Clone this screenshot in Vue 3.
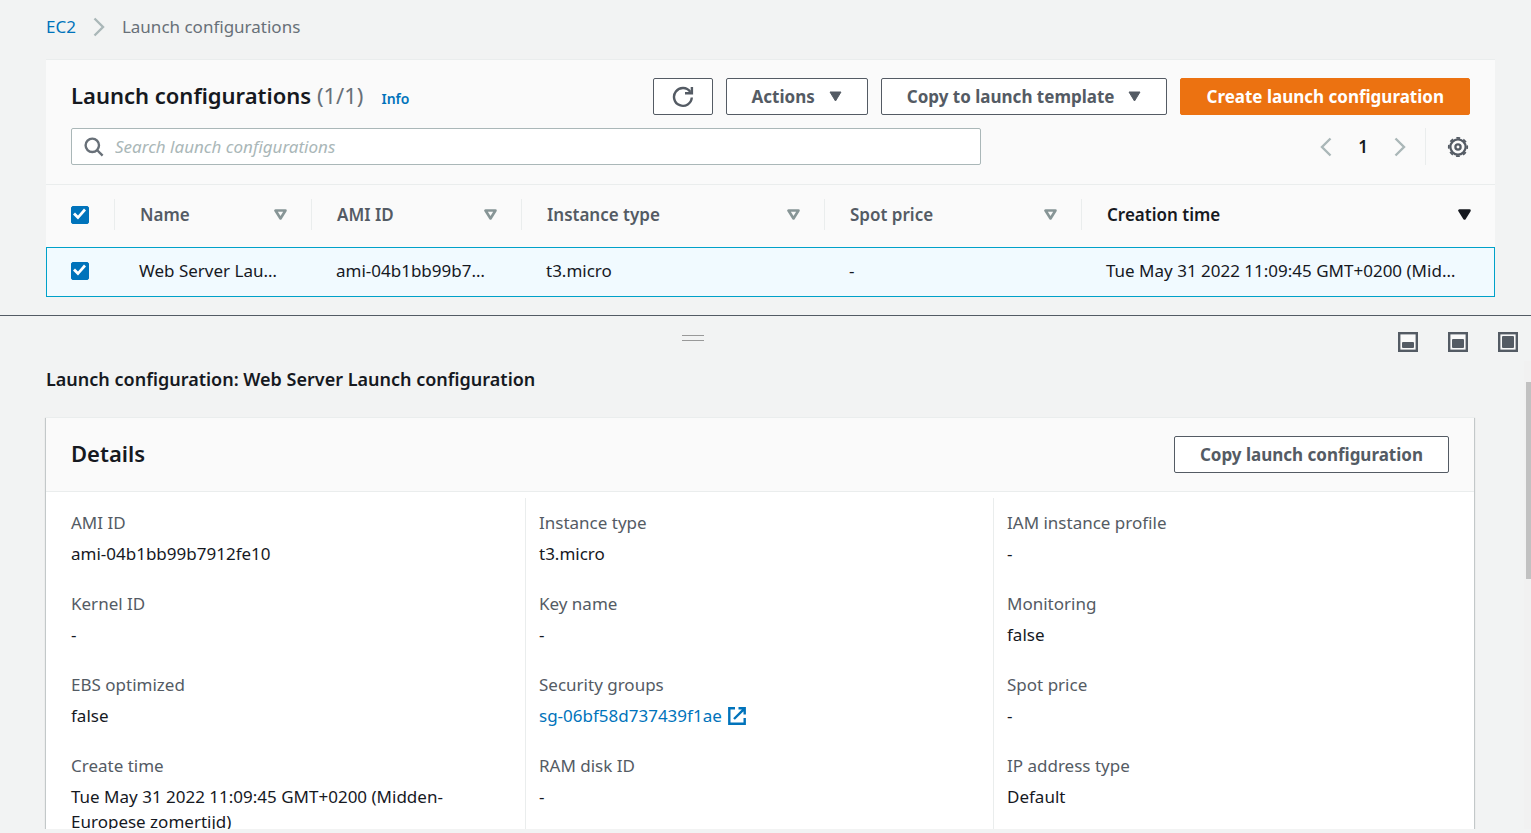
<script setup>
import { ref } from 'vue'

const query = ref('')
const allSelected = ref(true)
const rowSelected = ref(true)

const columns = [
  { label: 'Name', cls: 'col-name' },
  { label: 'AMI ID', cls: 'col-ami' },
  { label: 'Instance type', cls: 'col-type' },
  { label: 'Spot price', cls: 'col-spot' },
  { label: 'Creation time', cls: 'col-time', sorted: true },
]

const createTime = 'Tue May 31 2022 11:09:45 GMT+0200 (Midden-Europese zomertijd)'
const row = ['Web Server Launch configuration', 'ami-04b1bb99b7912fe10', 't3.micro', '-', createTime]

const details = [
  [
    { label: 'AMI ID', value: 'ami-04b1bb99b7912fe10' },
    { label: 'Kernel ID', value: '-' },
    { label: 'EBS optimized', value: 'false' },
    { label: 'Create time', value: createTime },
  ],
  [
    { label: 'Instance type', value: 't3.micro' },
    { label: 'Key name', value: '-' },
    { label: 'Security groups', value: 'sg-06bf58d737439f1ae', link: true },
    { label: 'RAM disk ID', value: '-' },
  ],
  [
    { label: 'IAM instance profile', value: '-' },
    { label: 'Monitoring', value: 'false' },
    { label: 'Spot price', value: '-' },
    { label: 'IP address type', value: 'Default' },
  ],
]

const panelSizes = [
  { label: 'Small panel', y: 10, h: 6 },
  { label: 'Medium panel', y: 7, h: 9 },
  { label: 'Full panel', y: 4, h: 12 },
]
</script>

<template>
  <div class="page">
    <main class="list">
      <nav class="crumbs" aria-label="Breadcrumbs">
        <a href="#">EC2</a>
        <svg class="chevron" width="12" height="20" viewBox="0 0 12 20"><path d="M1.5 1.5 10 10l-8.500 8.500" /></svg>
        <span>Launch configurations</span>
      </nav>

      <section class="table-card">
        <header class="toolbar">
          <h1>Launch configurations <span class="count">(1/1)</span></h1>
          <a class="info" href="#">Info</a>
          <div class="actions">
            <button class="btn icon-btn" type="button" aria-label="Refresh">
              <svg width="22" height="22" viewBox="0 0 22 22" fill="none" stroke="currentColor" stroke-width="2.400">
                <path d="M19.800 11.500A8.900 8.900 0 1 1 18.200 5.800" />
                <path d="M19.900 1V7.300H13" />
                <path d="M16.500 7.500 20 3.500V7.500z" fill="currentColor" stroke="none" />
              </svg>
            </button>
            <button class="btn" type="button">
              Actions
              <svg class="caret" width="13" height="11" viewBox="0 0 13 11"><path d="M1 1h11l-5.500 9z" /></svg>
            </button>
            <button class="btn" type="button">
              Copy to launch template
              <svg class="caret" width="13" height="11" viewBox="0 0 13 11"><path d="M1 1h11l-5.500 9z" /></svg>
            </button>
            <button class="btn primary" type="button">Create launch configuration</button>
          </div>
        </header>

        <div class="filters">
          <label class="search">
            <svg width="20" height="20" viewBox="0 0 20 20" fill="none" stroke="#687078" stroke-width="2.400">
              <circle cx="8.300" cy="8.300" r="6.700" /><path d="m13 13 5.600 5.600" />
            </svg>
            <input v-model="query" type="text" placeholder="Search launch configurations" aria-label="Search launch configurations" />
          </label>
          <div class="pager">
            <button type="button" aria-label="Previous page">
              <svg class="chevron" width="12" height="20" viewBox="0 0 12 20"><path d="M10.500 1.500 2 10l8.500 8.500" /></svg>
            </button>
            <button class="current" type="button">1</button>
            <button type="button" aria-label="Next page">
              <svg class="chevron" width="12" height="20" viewBox="0 0 12 20"><path d="M1.500 1.500 10 10l-8.500 8.500" /></svg>
            </button>
          </div>
          <button class="gear" type="button" aria-label="Preferences">
            <svg width="22" height="22" viewBox="0 0 22 22" fill="none" stroke="currentColor">
              <circle cx="11" cy="11" r="7.600" stroke-width="2.200" />
              <circle cx="11" cy="11" r="9.200" stroke-width="1.800" stroke-dasharray="3.800 3.425" stroke-dashoffset="1.900" />
              <circle cx="11" cy="11" r="2.600" stroke-width="2.300" />
            </svg>
          </button>
        </div>

        <table>
          <thead>
            <tr>
              <th class="col-check" scope="col">
                <div class="cell"><input v-model="allSelected" type="checkbox" aria-label="Select all" /></div>
              </th>
              <th v-for="c in columns" :key="c.label" :class="[c.cls, { sorted: c.sorted }]" scope="col">
                <div class="cell">
                  <span>{{ c.label }}</span>
                  <svg width="13" height="11" viewBox="0 0 13 11"><path d="M1.500 1.500h10l-5 8z" /></svg>
                </div>
              </th>
            </tr>
          </thead>
          <tbody>
            <tr>
              <td><input v-model="rowSelected" type="checkbox" aria-label="Select Web Server Launch configuration" /></td>
              <td v-for="v in row" :key="v">{{ v }}</td>
            </tr>
          </tbody>
        </table>
      </section>
    </main>

    <section class="split">
      <div class="split-bar">
        <div class="handle" role="separator" aria-label="Resize panel"></div>
        <div class="sizes">
          <button v-for="s in panelSizes" :key="s.label" type="button" :aria-label="s.label">
            <svg width="20" height="20" viewBox="0 0 20 20">
              <rect x="1.200" y="1.200" width="17.600" height="17.600" fill="#fafafa" stroke="#545b64" stroke-width="2.400" />
              <rect x="4" :y="s.y" width="12" :height="s.h" rx="1" fill="#545b64" />
            </svg>
          </button>
        </div>
      </div>

      <div class="split-body">
        <div class="split-content">
          <h2 class="panel-title">Launch configuration: Web Server Launch configuration</h2>
          <article class="details">
            <header>
              <h2>Details</h2>
              <button class="btn" type="button">Copy launch configuration</button>
            </header>
            <div class="grid">
              <dl v-for="(group, i) in details" :key="i">
                <div v-for="d in group" :key="d.label" class="pair">
                  <dt>{{ d.label }}</dt>
                  <dd>
                    <a v-if="d.link" href="#">{{ d.value }}
                      <svg width="18" height="18" viewBox="0 0 18 18" fill="none" stroke="currentColor" stroke-width="2.400">
                        <path d="M7 1.300H1.300v15.400h15.400V11" /><path d="M10.500 1.300h6.200v6.200M16.200 1.800 6 12" />
                      </svg>
                    </a>
                    <template v-else>{{ d.value }}</template>
                  </dd>
                </div>
              </dl>
            </div>
          </article>
        </div>
        <div class="scrollbar" aria-hidden="true"><div class="thumb"></div></div>
      </div>
    </section>
  </div>
</template>

<style>
body {
  background: #f2f3f3;
}
</style>

<style scoped>
.page {
  display: flex;
  flex-direction: column;
  height: 100vh;
  box-sizing: border-box;
  padding-bottom: 4px;
  overflow: hidden;
  background: #f2f3f3;
  color: #16191f;
  font-family: "Noto Sans", "Open Sans", sans-serif;
  font-size: 17px;
  line-height: 25px;
}
.page * {
  box-sizing: border-box;
}
button,
input {
  font: inherit;
  color: inherit;
}
button {
  padding: 0;
  border: 0;
  background: none;
  cursor: pointer;
}
svg {
  display: block;
  flex: none;
}
a {
  color: #0073bb;
  text-decoration: none;
}
h1,
h2,
dl,
dd {
  margin: 0;
}
.list {
  flex: none;
  padding: 14px 36px 18px 46px;
}
.crumbs {
  display: flex;
  align-items: center;
  gap: 17px;
  height: 25px;
  margin-bottom: 20px;
  color: #687078;
}
.chevron {
  fill: none;
  stroke: #aab7b8;
  stroke-width: 2.4;
}
.table-card {
  border-top: 1px solid #eaeded;
  background: #fafafa;
}
.toolbar {
  display: flex;
  align-items: center;
  padding: 18px 25px 0;
}
h1,
.details h2 {
  padding-bottom: 4px;
  font-size: 22px;
  line-height: 28px;
  font-weight: 600;
}
.count {
  color: #687078;
  font-weight: 400;
}
.info {
  margin: 4px 0 0 18px;
  font-size: 14px;
  line-height: 20px;
  font-weight: 600;
}
.actions {
  display: flex;
  gap: 13px;
  margin-left: auto;
}
.btn {
  display: flex;
  align-items: center;
  justify-content: center;
  gap: 14px;
  height: 37px;
  padding: 0 25px 1px;
  border: 1px solid #545b64;
  border-radius: 2px;
  background: #fff;
  color: #545b64;
  font-weight: 700;
  white-space: nowrap;
}
.icon-btn {
  padding: 0 18px;
}
.caret {
  fill: currentColor;
  stroke: currentColor;
  stroke-linejoin: round;
}
.primary {
  border-color: #ec7211;
  background: #ec7211;
  color: #fff;
}
.filters {
  display: flex;
  align-items: center;
  padding: 13px 26px 19px 25px;
}
.search {
  display: flex;
  align-items: center;
  gap: 11px;
  flex: 0 1 910px;
  height: 37px;
  padding: 0 12px;
  border: 1px solid #aab7b8;
  border-radius: 2px;
  background: #fff;
}
.search input {
  flex: 1;
  min-width: 0;
  padding: 0;
  border: 0;
  outline: 0;
  background: none;
}
.search input::placeholder {
  color: #aab7b8;
  font-style: italic;
  opacity: 1;
}
.pager {
  display: flex;
  align-items: center;
  gap: 26px;
  height: 37px;
  margin-left: auto;
  padding-right: 19px;
  border-right: 1px solid #eaeded;
}
.current {
  font-weight: 600;
}
.gear {
  margin-left: 21px;
  color: #545b64;
}
table {
  width: 100%;
  table-layout: fixed;
  border-collapse: separate;
  border-spacing: 0;
}
.col-check {
  width: 69px;
}
.col-name {
  width: 197px;
}
.col-ami {
  width: 210px;
}
.col-type {
  width: 303px;
}
.col-spot {
  width: 257px;
}
th {
  height: 63px;
  padding: 0 0 3px;
  border-top: 1px solid #eaeded;
  color: #545b64;
  font-weight: 600;
  text-align: left;
}
.cell {
  display: flex;
  align-items: center;
  justify-content: space-between;
  height: 31px;
  padding: 0 24px 0 25px;
  border-right: 1px solid #eaeded;
}
.cell svg {
  fill: none;
  stroke: #879596;
  stroke-width: 2.6;
  stroke-linejoin: round;
}
.sorted {
  color: #16191f;
}
.sorted .cell {
  border-right: 0;
}
.sorted .cell svg {
  fill: #16191f;
  stroke: #16191f;
}
td {
  height: 50px;
  padding: 0 30px 3px 24px;
  overflow: hidden;
  border: solid #00a1c9;
  border-width: 1px 0;
  background: #f1faff;
  text-overflow: ellipsis;
  white-space: nowrap;
}
td:first-child {
  padding-right: 0;
  border-left-width: 1px;
}
td:last-child {
  border-right-width: 1px;
}
input[type="checkbox"] {
  display: block;
  flex: none;
  width: 18px;
  height: 18px;
  margin: 0;
  appearance: none;
  border: 1px solid #687078;
  border-radius: 2px;
  background: #fff;
}
input[type="checkbox"]:checked {
  border-color: #0073bb;
  background: #0073bb;
}
input[type="checkbox"]:checked::after {
  content: "";
  display: block;
  width: 16px;
  height: 16px;
  background: #fff;
  clip-path: polygon(1px 8px, 3px 6px, 6px 9px, 12px 2px, 14px 4px, 6px 13px);
}
.split {
  display: flex;
  flex: 1;
  flex-direction: column;
  min-height: 0;
  border-top: 1px solid #545b64;
}
.split-bar {
  display: grid;
  grid-template-columns: 1fr auto;
  column-gap: 12px;
  flex: none;
  height: 45px;
  padding: 16px 13px 0 0;
}
.handle {
  width: 22px;
  height: 6px;
  margin-top: 3px;
  justify-self: center;
  border: solid #999;
  border-width: 1px 0;
}
.sizes {
  display: flex;
  gap: 30px;
  height: 20px;
}
.split-body {
  display: flex;
  flex: 1;
  min-height: 0;
}
.split-content {
  flex: 1;
  overflow: hidden;
  padding: 6px 50px 0 46px;
}
.panel-title {
  margin-bottom: 25px;
  font-size: 18px;
  line-height: 25px;
  font-weight: 600;
}
.details {
  border-top: 1px solid #eaeded;
  background: #fff;
  box-shadow: 0 1px 1px 0 rgba(0, 28, 36, 0.3), 1px 1px 1px 0 rgba(0, 28, 36, 0.15), -1px 1px 1px 0 rgba(0, 28, 36, 0.15);
}
.details header {
  display: flex;
  align-items: center;
  justify-content: space-between;
  padding: 18px 25px;
  border-bottom: 1px solid #eaeded;
  background: #fafafa;
}
.grid {
  display: grid;
  grid-template-columns: repeat(3, 1fr);
  padding: 6px 12px;
}
dl {
  display: flex;
  flex-direction: column;
  gap: 25px;
  padding: 12px 13px;
  border-right: 1px solid #eaeded;
}
dl:last-child {
  border-right: 0;
}
dt {
  margin-bottom: 6px;
  color: #545b64;
}
dd a {
  display: flex;
  align-items: center;
  gap: 6px;
}
.scrollbar {
  flex: none;
  width: 7px;
  padding: 21px 0 0 2px;
  background: #f1f1f1;
}
.thumb {
  height: 197px;
  background: #c1c1c1;
}
</style>
